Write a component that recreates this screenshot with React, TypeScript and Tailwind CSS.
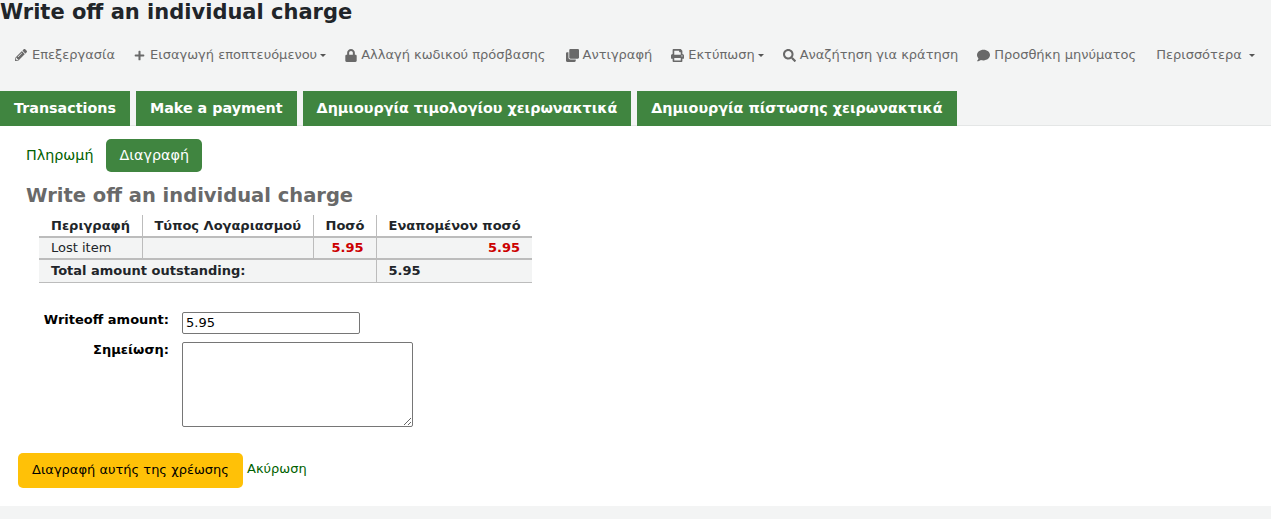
import { FaPencilAlt, FaPlus, FaLock, FaClone, FaPrint, FaSearch, FaComment } from "react-icons/fa"
import { ReactNode } from "react"

function Caret() {
  return <span className="ml-[3px] inline-block border-x-[3px] border-t-[3px] border-x-transparent border-t-[#555]" />
}

function ToolItem({ icon, label, caret, className }: { icon?: ReactNode, label: string, caret?: boolean, className?: string }) {
  return (
    <span className={`flex items-center whitespace-nowrap ${className ?? ""}`}>
      {icon}
      <span>{label}</span>
      {caret && <Caret />}
    </span>
  )
}

const headCell = "px-3 py-0 font-bold text-left whitespace-nowrap border-r border-[#bcbcbc] last:border-r-0"

export default function App() {
  return (
    <div className="h-[520px] bg-white overflow-hidden font-['DejaVu_Sans',sans-serif] text-[13px] text-[#212529]">
      <div className="bg-[#f3f4f4] h-[126px] border-b border-[#e4e6e6]">
        <h1 className="h-[25px] text-[21px] leading-[25px] font-bold">Write off an individual charge</h1>
        <div className="flex items-center h-[20px] mt-[20px] pl-[15px] text-[13px] text-[#696969]">
          <ToolItem icon={<FaPencilAlt className="w-[12px] h-[12px] mr-[5px]" />} label="Επεξεργασία" />
          <ToolItem className="ml-[19px]" icon={<FaPlus className="w-[11px] h-[11px] mr-[5px]" />} label="Εισαγωγή εποπτευόμενου" caret />
          <ToolItem className="ml-[19px]" icon={<FaLock className="w-[12px] h-[13px] mr-[4px]" />} label="Αλλαγή κωδικού πρόσβασης" />
          <ToolItem className="ml-[20px]" icon={<FaClone className="w-[13px] h-[13px] mr-[4px]" />} label="Αντιγραφή" />
          <ToolItem className="ml-[19px]" icon={<FaPrint className="w-[13px] h-[13px] mr-[4px]" />} label="Εκτύπωση" caret />
          <ToolItem className="ml-[19px]" icon={<FaSearch className="w-[13px] h-[13px] mr-[4px]" />} label="Αναζήτηση για κράτηση" />
          <ToolItem className="ml-[19px]" icon={<FaComment className="w-[13px] h-[13px] mr-[4px]" />} label="Προσθήκη μηνύματος" />
          <span className="ml-[20px] flex items-center whitespace-nowrap">
            Περισσότερα
            <span className="ml-[7px] inline-block border-x-[3px] border-t-[3px] border-x-transparent border-t-[#555]" />
          </span>
        </div>
        <div className="flex gap-[6px] mt-[26px] h-[35px] text-white font-bold text-[14.3px]">
          <span className="flex items-center px-[14px] bg-[#408540]">Transactions</span>
          <span className="flex items-center px-[14px] bg-[#408540]">Make a payment</span>
          <span className="flex items-center px-[14px] bg-[#408540]">Δημιουργία τιμολογίου χειρωνακτικά</span>
          <span className="flex items-center px-[14px] bg-[#408540]">Δημιουργία πίστωσης χειρωνακτικά</span>
        </div>
      </div>

      <div className="flex items-center h-[33px] mt-[13px] pl-[26px] text-[14.3px] text-[#006100]">
        <span>Πληρωμή</span>
        <span className="ml-[13px] flex items-center h-[33px] px-[13px] bg-[#408540] text-white rounded-[5px]">Διαγραφή</span>
      </div>

      <h2 className="ml-[26px] mt-[12px] text-[19.5px] leading-[24px] font-bold text-[#696969]">Write off an individual charge</h2>

      <table className="ml-[39px] mt-[7px] border-collapse text-[13px] w-[493px] table-fixed">
        <thead>
          <tr className="h-[22px] border-b-2 border-[#bcbcbc]">
            <th className={`${headCell} w-[103px]`}>Περιγραφή</th>
            <th className={`${headCell} w-[171px]`}>Τύπος Λογαριασμού</th>
            <th className={`${headCell} w-[63px]`}>Ποσό</th>
            <th className={headCell}>Εναπομένον ποσό</th>
          </tr>
        </thead>
        <tbody>
          <tr className="h-[22px] bg-[#f3f4f4] border-b-2 border-[#bcbcbc]">
            <td className="px-3 border-r border-[#bcbcbc]">Lost item</td>
            <td className="px-3 border-r border-[#bcbcbc]"></td>
            <td className="px-3 border-r border-[#bcbcbc] text-right font-bold text-[#cc0000]">5.95</td>
            <td className="px-3 text-right font-bold text-[#cc0000]">5.95</td>
          </tr>
          <tr className="h-[23px] bg-[#f3f4f4] border-b border-[#bcbcbc] font-bold">
            <td colSpan={3} className="px-3 border-r border-[#bcbcbc]">Total amount outstanding:</td>
            <td className="px-3">5.95</td>
          </tr>
        </tbody>
      </table>

      <form className="mt-[29px] text-black">
        <div className="flex items-start">
          <label className="w-[169px] text-right font-bold leading-[15px]">Writeoff amount:</label>
          <input readOnly value="5.95" className="ml-[13px] w-[178px] h-[22px] px-[3px] text-[13px] border border-[#767676] rounded-[2px] outline-none" />
        </div>
        <div className="flex items-start mt-[8px]">
          <label className="w-[169px] text-right font-bold leading-[15px]">Σημείωση:</label>
          <textarea className="ml-[13px] w-[231px] h-[85px] border border-[#767676] rounded-[2px] outline-none block" />
        </div>
      </form>

      <div className="flex items-center mt-[26px] ml-[18px]">
        <span className="flex items-center justify-center w-[225px] h-[35px] bg-[#ffc107] rounded-[5px] text-black">Διαγραφή αυτής της χρέωσης</span>
        <span className="ml-[4px] text-[#006100] -mt-[3px]">Ακύρωση</span>
      </div>

      <div className="h-[13px] mt-[18px] bg-[#f3f4f4]" />
    </div>
  )
}
